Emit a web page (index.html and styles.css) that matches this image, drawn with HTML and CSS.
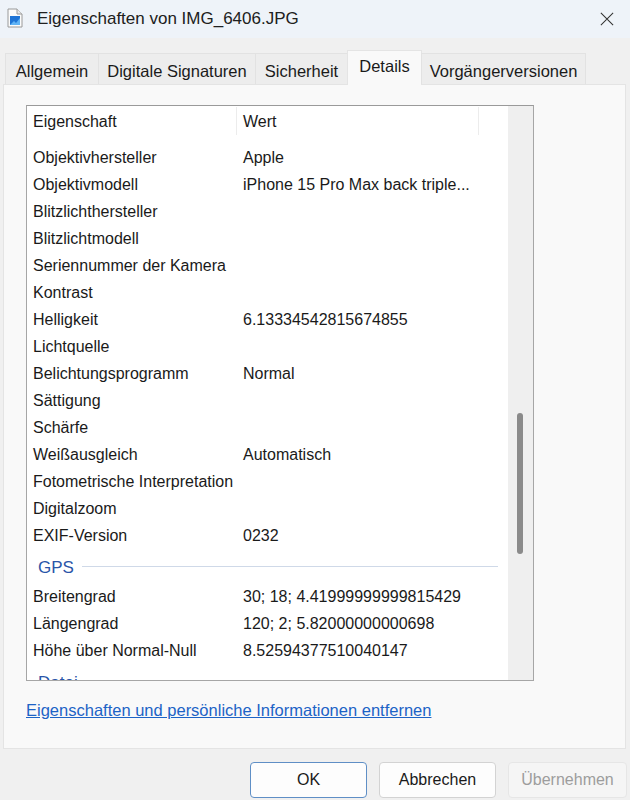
FILE: index.html
```html
<!DOCTYPE html>
<html lang="de">
<head>
    <meta charset="UTF-8">
    <title>Eigenschaften von IMG_6406.JPG</title>
    <link rel="stylesheet" href="styles.css">
</head>
<body>
    <div class="titlebar">
        <svg class="file-icon" width="16" height="20" viewBox="0 0 16 20">
            <path d="M1 1h9l5 5v13H1z" fill="#fbfbfb" stroke="#9a9a9a" stroke-width="1"/>
            <path d="M10 1v5h5" fill="#e8e8e8" stroke="#9a9a9a" stroke-width="1"/>
            <rect x="3" y="8" width="10" height="9" fill="#1e74d6"/>
            <path d="M3 17l4-4 2 2 4-5v7z" fill="#5fb3f5"/>
        </svg>
        <span class="title">Eigenschaften von IMG_6406.JPG</span>
        <svg class="close" width="16" height="16" viewBox="0 0 16 16">
            <path d="M1 1L15 15M15 1L1 15" stroke="#333" stroke-width="1.2"/>
        </svg>
    </div>

    <div class="tabs">
        <div class="tab" style="width:94px">Allgemein</div>
        <div class="tab" style="width:158px">Digitale Signaturen</div>
        <div class="tab" style="width:93px">Sicherheit</div>
        <div class="tab active" style="width:75px">Details</div>
        <div class="tab" style="width:165px">Vorgängerversionen</div>
    </div>

    <div class="panel">
        <div class="listbox">
            <div class="list-main">
                <div class="list-header">
                    <div class="col-name">Eigenschaft</div>
                    <div class="col-value">Wert</div>
                </div>
                <div class="list-body">
                    <div class="list-inner">
                        <div class="group"><span>Erweiterte Fotoeigenschaften</span></div>
                        <div class="row"><div class="col-name">Objektivhersteller</div><div class="col-value">Apple</div></div>
                        <div class="row"><div class="col-name">Objektivmodell</div><div class="col-value">iPhone 15 Pro Max back triple...</div></div>
                        <div class="row"><div class="col-name">Blitzlichthersteller</div><div class="col-value"></div></div>
                        <div class="row"><div class="col-name">Blitzlichtmodell</div><div class="col-value"></div></div>
                        <div class="row"><div class="col-name">Seriennummer der Kamera</div><div class="col-value"></div></div>
                        <div class="row"><div class="col-name">Kontrast</div><div class="col-value"></div></div>
                        <div class="row"><div class="col-name">Helligkeit</div><div class="col-value">6.13334542815674855</div></div>
                        <div class="row"><div class="col-name">Lichtquelle</div><div class="col-value"></div></div>
                        <div class="row"><div class="col-name">Belichtungsprogramm</div><div class="col-value">Normal</div></div>
                        <div class="row"><div class="col-name">Sättigung</div><div class="col-value"></div></div>
                        <div class="row"><div class="col-name">Schärfe</div><div class="col-value"></div></div>
                        <div class="row"><div class="col-name">Weißausgleich</div><div class="col-value">Automatisch</div></div>
                        <div class="row"><div class="col-name">Fotometrische Interpretation</div><div class="col-value"></div></div>
                        <div class="row"><div class="col-name">Digitalzoom</div><div class="col-value"></div></div>
                        <div class="row"><div class="col-name">EXIF-Version</div><div class="col-value">0232</div></div>
                        <div class="group"><span>GPS</span></div>
                        <div class="row"><div class="col-name">Breitengrad</div><div class="col-value">30; 18; 4.41999999999815429</div></div>
                        <div class="row"><div class="col-name">Längengrad</div><div class="col-value">120; 2; 5.82000000000698</div></div>
                        <div class="row"><div class="col-name">Höhe über Normal-Null</div><div class="col-value">8.52594377510040147</div></div>
                        <div class="group"><span>Datei</span></div>
                    </div>
                </div>
            </div>
            <div class="scrollbar">
                <div class="thumb"></div>
            </div>
        </div>

        <a class="remove-link" href="#">Eigenschaften und persönliche Informationen entfernen</a>
    </div>

    <div class="buttons">
        <button class="btn default">OK</button>
        <button class="btn">Abbrechen</button>
        <button class="btn disabled">Übernehmen</button>
    </div>
</body>
</html>
```
FILE: styles.css
```css
body {
    margin: 0;
    width: 630px;
    height: 800px;
    overflow: hidden;
    font-family: "Liberation Sans", Arial, sans-serif;
    font-size: 16px;
    color: #1a1a1a;
    background-color: #f0f0f0;
}

.titlebar {
    height: 38px;
    background-color: #eef3f9;
    display: flex;
    align-items: center;
}

.file-icon {
    margin-left: 7px;
    margin-top: -2px;
}

.title {
    margin-left: 14px;
    font-size: 17px;
    color: #202020;
}

.close {
    margin-left: auto;
    margin-right: 16px;
    width: 14px;
    height: 14px;
}

.tabs {
    display: flex;
    align-items: flex-end;
    height: 34px;
    margin-top: 12px;
    padding-left: 5px;
    position: relative;
    z-index: 1;
}

.tab {
    box-sizing: border-box;
    height: 31px;
    padding-top: 8px;
    text-align: center;
    font-size: 16.5px;
    background-color: #ededed;
    border: 1px solid #e2e2e2;
    border-bottom: none;
    margin-right: -1px;
}

.tab.active {
    height: 35px;
    margin-bottom: -1px;
    padding-top: 6px;
    background-color: #f9f9f9;
    border-color: #e4e4e4;
}

.panel {
    box-sizing: border-box;
    height: 665px;
    margin: 0 4px 0 3px;
    padding: 20px 0 0 22px;
    background-color: #f9f9f9;
    border: 1px solid #e4e4e4;
}

.listbox {
    box-sizing: border-box;
    width: 508px;
    height: 576px;
    display: flex;
    background-color: #fff;
    border: 1px solid #a6a6a6;
    border-top-color: #9a9a9a;
}

.list-main {
    width: 481px;
    display: flex;
    flex-direction: column;
}

.list-header {
    display: flex;
    height: 32px;
    line-height: 30px;
    flex-shrink: 0;
    background-color: #fff;
}

.list-header .col-name {
    border-right: 1px solid #ececec;
    margin: 1px 0 3px;
}

.list-header .col-value {
    width: 242px;
    border-right: 1px solid #ececec;
    margin: 1px 0 3px;
}

.col-name {
    box-sizing: border-box;
    width: 210px;
    padding-left: 6px;
    white-space: nowrap;
}

.col-value {
    box-sizing: border-box;
    padding-left: 6px;
    white-space: nowrap;
}

.list-body {
    flex: 1;
    overflow: hidden;
}

.list-inner {
    margin-top: -28px;
}

.row {
    display: flex;
    height: 27px;
    line-height: 27px;
}

.group {
    box-sizing: border-box;
    height: 34px;
    display: flex;
    align-items: center;
    padding: 4px 10px 0 11px;
    font-size: 17px;
    color: #2a55a8;
}

.group::after {
    content: "";
    flex: 1;
    height: 1px;
    margin-left: 8px;
    margin-top: -4px;
    background-color: #cfd9e8;
}

.scrollbar {
    width: 25px;
    background-color: #efefef;
}

.thumb {
    width: 6px;
    height: 141px;
    margin: 307px 0 0 9px;
    border-radius: 3px;
    background-color: #8a8a8a;
}

.remove-link {
    display: inline-block;
    margin-top: 20px;
    font-size: 16.5px;
    color: #1d63c6;
    text-decoration: underline;
}

.buttons {
    display: flex;
    justify-content: flex-end;
    gap: 12px;
    margin-top: 13px;
    margin-right: 3px;
}

.btn {
    box-sizing: border-box;
    width: 117px;
    height: 36px;
    font-family: "Liberation Sans", Arial, sans-serif;
    font-size: 16px;
    color: #1a1a1a;
    background-color: #fdfdfd;
    border: 1px solid #d3d3d3;
    border-radius: 4px;
}

.btn.default {
    border-color: #5f8fc6;
}

.btn.disabled {
    width: 119px;
    color: #9d9d9d;
    background-color: #f5f5f5;
    border-color: #e6e6e6;
}
```
